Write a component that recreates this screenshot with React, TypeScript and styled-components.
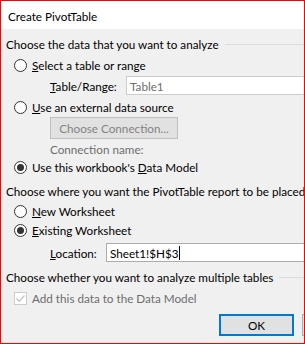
import styled, { createGlobalStyle } from 'styled-components';

const GlobalStyle = createGlobalStyle`
  html, body {
    margin: 0;
    padding: 0;
    background: #ffffff;
  }
  * {
    box-sizing: border-box;
  }
`;

function Radio({ checked, children }: { checked?: boolean; children: React.ReactNode }) {
  return (
    <RadioRow>
      <RadioCircle>{checked && <RadioDot />}</RadioCircle>
      <OptionText>{children}</OptionText>
    </RadioRow>
  );
}

function App() {
  return (
    <>
      <GlobalStyle />
      <Window>
        <TitleBar>Create PivotTable</TitleBar>
        <Body>
          <Heading $mt={7}>
            <HeadingText>Choose the data that you want to analyze</HeadingText>
            <HeadingLine />
          </Heading>
          <Spacer $h={4} />
          <Radio>
            <u>S</u>elect a table or range
          </Radio>
          <Spacer $h={2} />
          <FieldRow>
            <FieldLabel $w={76}>
              <u>T</u>able/Range:
            </FieldLabel>
            <TextBox $disabled>Table1</TextBox>
          </FieldRow>
          <Spacer $h={3} />
          <Radio>
            <u>U</u>se an external data source
          </Radio>
          <Spacer $h={1} />
          <IndentRow $h={22}>
            <DisabledButton>Choose Connection...</DisabledButton>
          </IndentRow>
          <Spacer $h={2} />
          <IndentRow $h={16}>
            <MutedText>Connection name:</MutedText>
          </IndentRow>
          <Spacer $h={1} />
          <Radio checked>
            Use this workbook's <u>D</u>ata Model
          </Radio>
          <Heading $mt={7}>
            <HeadingText>Choose where you want the PivotTable report to be placed</HeadingText>
          </Heading>
          <Spacer $h={3} />
          <Radio>
            <u>N</u>ew Worksheet
          </Radio>
          <Spacer $h={1} />
          <Radio checked>
            <u>E</u>xisting Worksheet
          </Radio>
          <Spacer $h={4} />
          <FieldRow>
            <FieldLabel $w={56}>
              <u>L</u>ocation:
            </FieldLabel>
            <TextBox>
              Sheet1!$H$3
              <Caret />
            </TextBox>
          </FieldRow>
          <Heading $mt={7}>
            <HeadingText>Choose whether you want to analyze multiple tables</HeadingText>
            <HeadingLine />
          </Heading>
          <Spacer $h={4} />
          <RadioRow>
            <CheckBox>
              <svg width="11" height="11" viewBox="0 0 11 11">
                <path d="M1.5 5.5 L4.2 8.2 L9.5 2.5" fill="none" stroke="#c4c4c4" strokeWidth="1.3" />
              </svg>
            </CheckBox>
            <MutedText>Add this data to the Data Model</MutedText>
          </RadioRow>
          <Footer>
            <PrimaryButton>OK</PrimaryButton>
            <PlainButton>Cancel</PlainButton>
          </Footer>
        </Body>
      </Window>
    </>
  );
}

export default App;

const Window = styled.div`
  width: 305px;
  height: 344px;
  border: 1px solid #ff0000;
  display: flex;
  flex-direction: column;
  overflow: hidden;
  font-family: Lato, 'Noto Sans', sans-serif;
  font-size: 11.7px;
  color: #000000;
`;

const TitleBar = styled.div`
  height: 28px;
  flex-shrink: 0;
  background: #ffffff;
  display: flex;
  align-items: center;
  padding-left: 7px;
  padding-top: 1px;
`;

const Body = styled.div`
  flex: 1;
  background: #f0f0f0;
  padding-left: 5px;
  display: flex;
  flex-direction: column;
  min-width: 0;
`;

const Spacer = styled.div<{ $h: number }>`
  height: ${(p) => p.$h}px;
  flex-shrink: 0;
`;

const Heading = styled.div<{ $mt: number }>`
  margin-top: ${(p) => p.$mt}px;
  height: 16px;
  flex-shrink: 0;
  display: flex;
  align-items: center;
  gap: 6px;
  white-space: nowrap;
`;

const HeadingText = styled.span`
  flex-shrink: 0;
`;

const HeadingLine = styled.div`
  flex: 1;
  height: 1px;
  background: #dcdcdc;
  margin-top: 1px;
`;

const RadioRow = styled.div`
  height: 18px;
  flex-shrink: 0;
  display: flex;
  align-items: center;
  padding-left: 8px;
  gap: 5px;
  white-space: nowrap;
`;

const RadioCircle = styled.span`
  width: 13px;
  height: 13px;
  border-radius: 50%;
  border: 1px solid #333333;
  background: #ffffff;
  display: flex;
  align-items: center;
  justify-content: center;
  flex-shrink: 0;
`;

const RadioDot = styled.span`
  width: 7px;
  height: 7px;
  border-radius: 50%;
  background: #333333;
`;

const OptionText = styled.span`
  u {
    text-decoration-thickness: 1px;
  }
`;

const FieldRow = styled.div`
  height: 19px;
  flex-shrink: 0;
  display: flex;
  align-items: center;
  padding-left: 44px;
  white-space: nowrap;
`;

const FieldLabel = styled.span<{ $w: number }>`
  width: ${(p) => p.$w}px;
  flex-shrink: 0;
`;

const TextBox = styled.div<{ $disabled?: boolean }>`
  flex: 1 0 200px;
  height: 19px;
  background: #ffffff;
  border: 1px solid ${(p) => (p.$disabled ? '#cccccc' : '#acacac')};
  color: ${(p) => (p.$disabled ? '#6d6d6d' : '#000000')};
  display: flex;
  align-items: center;
  padding-left: 3px;
`;

const Caret = styled.span`
  width: 1px;
  height: 14px;
  background: #000000;
  margin-left: 1px;
`;

const IndentRow = styled.div<{ $h: number }>`
  display: flex;
  align-items: center;
  padding-left: 44px;
  height: ${(p) => p.$h}px;
  flex-shrink: 0;
`;

const DisabledButton = styled.div`
  width: 128px;
  height: 22px;
  border: 1px solid #bfbfbf;
  background: #e1e1e1;
  color: #838383;
  display: flex;
  align-items: center;
  justify-content: center;
`;

const MutedText = styled.span`
  color: #6d6d6d;
  white-space: nowrap;
`;

const CheckBox = styled.span`
  width: 13px;
  height: 13px;
  border: 1px solid #cccccc;
  background: #ffffff;
  display: flex;
  align-items: center;
  justify-content: center;
  flex-shrink: 0;
`;

const Footer = styled.div`
  margin-top: 7px;
  display: flex;
  gap: 8px;
  padding-left: 213px;
`;

const PrimaryButton = styled.div`
  width: 75px;
  height: 22px;
  flex-shrink: 0;
  background: #e1e1e1;
  border: 2px solid #0078d7;
  display: flex;
  align-items: center;
  justify-content: center;
`;

const PlainButton = styled.div`
  width: 75px;
  height: 22px;
  flex-shrink: 0;
  background: #e1e1e1;
  border: 1px solid #adadad;
  display: flex;
  align-items: center;
  justify-content: center;
`;
